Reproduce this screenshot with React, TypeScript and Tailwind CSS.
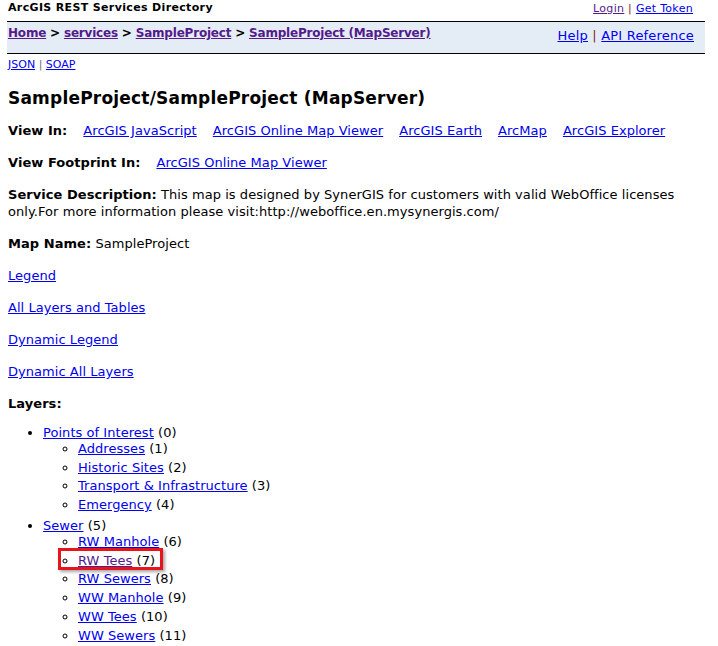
import React from "react";

const F = { fontFamily: '"DejaVu Sans", Verdana, sans-serif' };

function L({ children, v = false, className = "" }: { children: React.ReactNode; v?: boolean; className?: string }) {
  return (
    <a href="#" className={`underline ${v ? "text-[#551a8b]" : "text-[#0000ee]"} ${className}`}>
      {children}
    </a>
  );
}

type Item = { name: string; id: number; v?: boolean; mark?: boolean };
const groups: { name: string; id: number; children: Item[] }[] = [
  {
    name: "Points of Interest",
    id: 0,
    children: [
      { name: "Addresses", id: 1 },
      { name: "Historic Sites", id: 2 },
      { name: "Transport & Infrastructure", id: 3 },
      { name: "Emergency", id: 4 },
    ],
  },
  {
    name: "Sewer",
    id: 5,
    children: [
      { name: "RW Manhole", id: 6 },
      { name: "RW Tees", id: 7, v: true, mark: true },
      { name: "RW Sewers", id: 8 },
      { name: "WW Manhole", id: 9 },
      { name: "WW Tees", id: 10 },
      { name: "WW Sewers", id: 11 },
    ],
  },
];

export default function App() {
  return (
    <div className="w-[718px] h-[646px] bg-white text-black overflow-hidden" style={F}>
      {/* top title row */}
      <div className="flex items-center justify-between pl-[8px] pr-[25px] h-[15px]">
        <span className="text-[11px] font-bold leading-[14px] tracking-[0.35px]">ArcGIS REST Services Directory</span>
        <span className="text-[11px] leading-[14px] pt-[2px] tracking-[0.3px]">
          <L v>Login</L> <span className="text-[#8b1a1a]">|</span> <L>Get Token</L>
        </span>
      </div>
      {/* breadcrumb bar */}
      <div className="mt-[6px] ml-[7px] w-[698px] h-[33px] bg-[#e4edf6] border-t border-b border-black flex justify-between pl-[1px] pr-[11px]">
        <div className="text-[12px] font-bold leading-[15px] pt-[4px] tracking-[-0.2px]">
          <L v>Home</L> &gt; <L v>services</L> &gt; <L v>SampleProject</L> &gt; <L v>SampleProject (MapServer)</L>
        </div>
        <div className="text-[13px] leading-[16px] pt-[6px] tracking-[0.2px]">
          <L>Help</L> <span className="text-[#8b1a1a]">|</span> <L>API Reference</L>
        </div>
      </div>
      {/* JSON | SOAP */}
      <div className="pl-[8px] text-[11px] leading-[14px] pt-[4px]">
        <L>JSON</L> <span className="text-gray-500">|</span> <L>SOAP</L>
      </div>
      <div className="pl-[8px] pr-[8px]">
        <h2 className="text-[17px] font-bold leading-[20px] mt-[16px] tracking-[0.2px]">SampleProject/SampleProject (MapServer)</h2>
        <div className="text-[13px] leading-[17px] tracking-[0.05px]">
          <p className="mt-[14px]">
            <b>View In:</b>
            <L className="ml-[16px]">ArcGIS JavaScript</L>
            <L className="ml-[16px]">ArcGIS Online Map Viewer</L>
            <L className="ml-[16px]">ArcGIS Earth</L>
            <L className="ml-[16px]">ArcMap</L>
            <L className="ml-[16px]">ArcGIS Explorer</L>
          </p>
          <p className="mt-[15px]">
            <b>View Footprint In:</b>
            <L className="ml-[16px]">ArcGIS Online Map Viewer</L>
          </p>
          <p className="mt-[15px]">
            <b>Service Description:</b> This map is designed by SynerGIS for customers with valid WebOffice licenses
            only.For more information please visit:http://weboffice.en.mysynergis.com/
          </p>
          <p className="mt-[15px]">
            <b>Map Name:</b> SampleProject
          </p>
          <p className="mt-[15px]">
            <L>Legend</L>
          </p>
          <p className="mt-[15px]">
            <L>All Layers and Tables</L>
          </p>
          <p className="mt-[15px]">
            <L>Dynamic Legend</L>
          </p>
          <p className="mt-[15px]">
            <L>Dynamic All Layers</L>
          </p>
          <p className="mt-[15px] font-bold">Layers:</p>
          <ul className="list-disc pl-[35px] mt-[12px]">
            {groups.map((g, gi) => (
              <li key={g.id} className={gi > 0 ? "mt-[4px]" : ""}>
                <L>{g.name}</L> ({g.id})
                <ul className="list-[circle] pl-[35px] -mt-[1px]">
                  {g.children.map((c, ci) => (
                    <li key={c.id} className={ci > 0 ? "mt-[1.7px]" : ""}>
                      {c.mark ? (
                        <span className="relative">
                          <L v>{c.name}</L> ({c.id})
                          <span className="absolute -left-[20px] -right-[8px] -top-[5px] -bottom-[2px] border-[3px] border-[#e8141b] shadow-[2px_2px_3px_rgba(0,0,0,0.35)]" />
                        </span>
                      ) : (
                        <>
                          <L v={c.v}>{c.name}</L> ({c.id})
                        </>
                      )}
                    </li>
                  ))}
                </ul>
              </li>
            ))}
          </ul>
        </div>
      </div>
    </div>
  );
}
